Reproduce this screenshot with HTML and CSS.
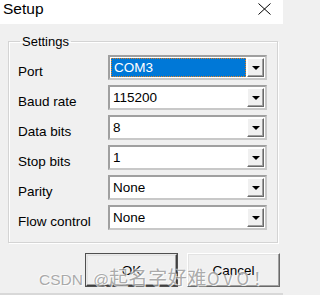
FILE: index.html
```html
<!DOCTYPE html>
<html>
<head>
<meta charset="utf-8">
<link rel="stylesheet" href="styles.css">
</head>
<body>
<div class="dialog">
  <div class="titlebar">
    <span class="title">Setup</span>
    <svg class="close" width="13" height="12" viewBox="0 0 13 12"><path d="M0.5 0.5 L12.5 11.5 M12.5 0.5 L0.5 11.5" stroke="#000" stroke-width="1" fill="none"/></svg>
  </div>
  <div class="content">
    <fieldset class="group">
      <legend class="legend">Settings</legend>
      <div class="rows">
        <div class="row"><span class="label">Port</span><div class="combo"><div class="field selected"><span class="focus">COM3</span></div><div class="btn"><span class="arrow"></span></div></div></div>
        <div class="row"><span class="label">Baud rate</span><div class="combo"><div class="field">115200</div><div class="btn"><span class="arrow"></span></div></div></div>
        <div class="row"><span class="label">Data bits</span><div class="combo"><div class="field">8</div><div class="btn"><span class="arrow"></span></div></div></div>
        <div class="row"><span class="label">Stop bits</span><div class="combo"><div class="field">1</div><div class="btn"><span class="arrow"></span></div></div></div>
        <div class="row"><span class="label">Parity</span><div class="combo"><div class="field">None</div><div class="btn"><span class="arrow"></span></div></div></div>
        <div class="row"><span class="label">Flow control</span><div class="combo"><div class="field">None</div><div class="btn"><span class="arrow"></span></div></div></div>
      </div>
    </fieldset>
    <div class="buttons">
      <div class="pbtn default"><span>OK</span></div>
      <div class="pbtn"><span>Cancel</span></div>
    </div>
    <div class="watermark"><span class="wm-latin">CSDN @</span><span class="wm-cjk">起名字好难</span><span class="wm-end">OvO！</span></div>
  </div>
</div>
</body>
</html>
```
FILE: styles.css
```css
html, body {
  margin: 0;
  padding: 0;
}
body {
  width: 283px;
  height: 295px;
  overflow: hidden;
  background: #f0f0f0;
  font-family: "Liberation Sans", Arial, sans-serif;
}
.dialog {
  width: 283px;
  height: 295px;
  display: flex;
  flex-direction: column;
}
.titlebar {
  height: 24px;
  background: #ffffff;
  display: flex;
  align-items: flex-start;
  justify-content: space-between;
  padding: 0 12px 0 3px;
  box-sizing: border-box;
}
.title {
  font-family: "Liberation Sans", Arial, sans-serif;
  font-size: 15.5px;
  line-height: normal;
  color: #000;
}
.close {
  margin-top: 3px;
}
.content {
  flex: 1;
  position: relative;
  padding: 10px 0 0 8px;
  box-sizing: border-box;
  border-bottom: 2px solid #d8d8d8;
}
.group {
  margin: 0;
  width: 270px;
  height: 209px;
  box-sizing: border-box;
  border: 1px solid #d4d4d4;
  box-shadow: inset 1px 1px 0 #ffffff, 1px 1px 0 #ffffff;
  padding: 6px 0 0 9px;
}
.legend {
  font-size: 13px;
  padding: 0 2px;
  margin-left: 2px;
  line-height: 15px;
  color: #000;
}
.rows {
  display: flex;
  flex-direction: column;
  gap: 5px;
}
.row {
  display: grid;
  grid-template-columns: 90px 159px;
  align-items: end;
}
.label {
  font-size: 13.5px;
  line-height: 16px;
  color: #000;
}
.combo {
  height: 25px;
  box-sizing: border-box;
  border: 2px solid;
  border-color: #a0a0a0 #c8c8c8 #c8c8c8 #a0a0a0;
  background: #fff;
  display: flex;
  padding: 1px;
}
.field {
  flex: 1;
  font-size: 13.5px;
  line-height: 19px;
  padding-left: 2px;
  color: #000;
}
.field.selected {
  background: #0078d7;
  color: #fff;
  outline: 1px dotted #e08020;
  outline-offset: -1px;
  padding-left: 0;
}
.focus {
  padding-left: 3px;
}
.btn {
  width: 17px;
  box-sizing: border-box;
  background: #f0f0f0;
  border: 1px solid;
  border-color: #ffffff #696969 #696969 #ffffff;
  box-shadow: inset -1px -1px 0 #a0a0a0;
  display: flex;
  align-items: center;
  justify-content: center;
  margin-left: 1px;
}
.arrow {
  width: 0;
  height: 0;
  border-left: 4px solid transparent;
  border-right: 4px solid transparent;
  border-top: 4px solid #000;
}
.buttons {
  display: flex;
  gap: 9px;
  margin: 10px 0 0 77px;
}
.pbtn {
  width: 93px;
  height: 34px;
  box-sizing: border-box;
  background: #f0f0f0;
  border: 1px solid;
  border-color: #ffffff #696969 #696969 #ffffff;
  box-shadow: inset -1px -1px 0 #a0a0a0, inset 1px 1px 0 #e3e3e3;
  display: flex;
  align-items: center;
  justify-content: center;
  font-size: 13.5px;
  color: #000;
}
.pbtn.default {
  border: 2px solid;
  border-color: #e8e8e8 #404040 #404040 #e8e8e8;
  outline: 1px solid #505050;
  outline-offset: -1px;
}
.watermark {
  position: absolute;
  left: 39px;
  top: 241px;
  font-family: "Liberation Sans", "Noto Sans CJK SC", sans-serif;
  color: rgba(150, 150, 150, 0.8);
  text-shadow: 1px 1px 0 rgba(255,255,255,0.8), -1px -1px 0 rgba(255,255,255,0.5);
  white-space: nowrap;
  line-height: 24px;
}
.wm-latin {
  font-size: 15.5px;
  word-spacing: 6px;
}
.wm-cjk {
  font-family: "Noto Sans CJK SC", sans-serif;
  font-size: 19px;
  letter-spacing: 0.6px;
}
.wm-end {
  font-family: "Noto Sans CJK SC", sans-serif;
  font-size: 17px;
  letter-spacing: 4px;
}
```
